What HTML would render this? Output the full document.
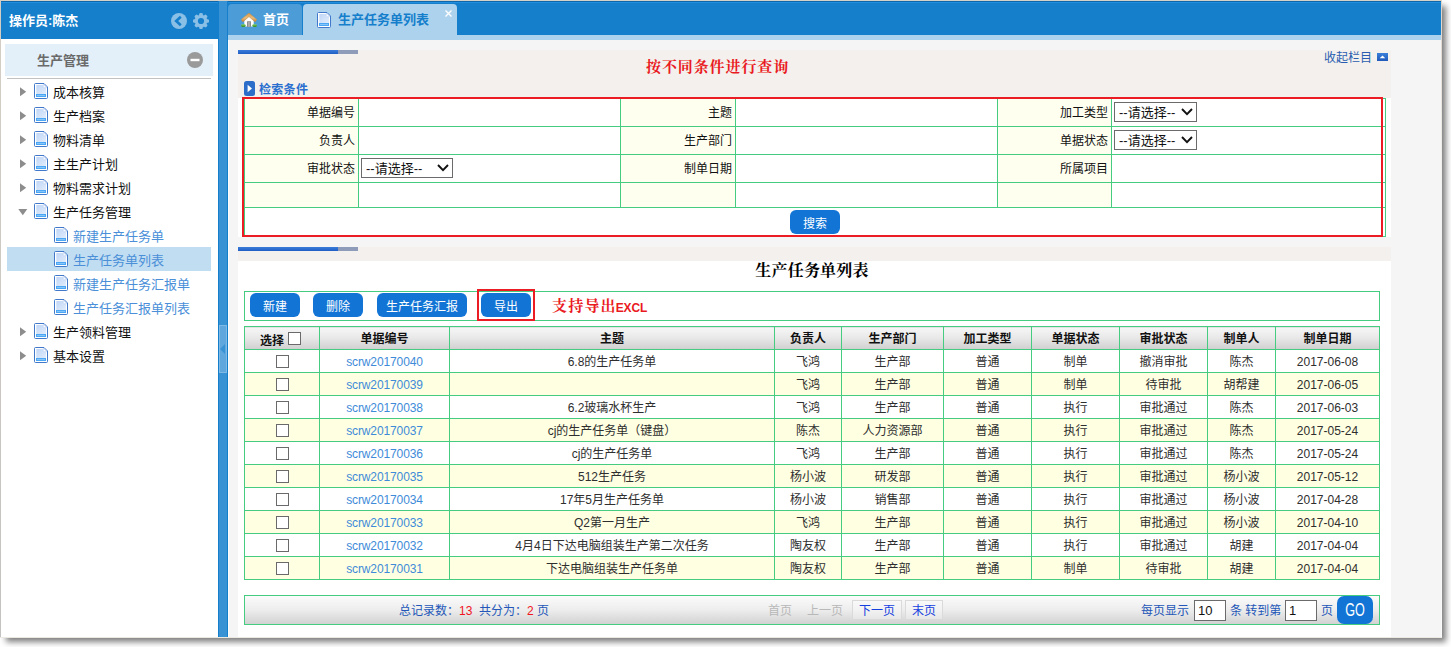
<!DOCTYPE html>
<html lang="zh-CN">
<head>
<meta charset="utf-8">
<title>生产任务单列表</title>
<style>
*{box-sizing:border-box;}
html,body{margin:0;padding:0;}
body{width:1451px;height:647px;overflow:hidden;background:#fff;position:relative;
 font-family:"Liberation Sans","Noto Sans CJK SC",sans-serif;font-size:12px;color:#222;}
#win{position:absolute;left:0;top:0;width:1442px;height:638px;background:#f5f5f5;overflow:hidden;}
#shadow{position:absolute;left:2px;top:2px;width:1440px;height:636px;box-shadow:4px 4px 6px 0 rgba(0,0,0,.5);}
#edgeT{position:absolute;left:0;top:0;width:1442px;height:1px;background:#d6d1c8;z-index:50;}
#edgeL{position:absolute;left:0;top:0;width:1px;height:638px;background:linear-gradient(#d4cec5,#c4c3c1);z-index:50;}
#edgeR{position:absolute;left:1441px;top:0;width:1px;height:638px;background:linear-gradient(#dcd4cb,#f4f2f0 30%,#fafafa);z-index:50;}
#edgeB{position:absolute;left:0;top:637px;width:1442px;height:1px;background:#ece8e2;z-index:50;}
.abs{position:absolute;}
/* sidebar */
#shead{position:absolute;left:1px;top:1px;width:217px;height:38px;background:#157fcc;border-top:1px solid #0f66a8;box-shadow:inset 0 1px 0 #228ee0;}
#shead .ttl{position:absolute;left:8px;top:10px;line-height:18px;font-size:13px;font-weight:bold;color:#fff;white-space:nowrap;}
#sbody{position:absolute;left:1px;top:39px;width:217px;height:598px;background:#fff;}
#acc{position:absolute;left:5px;top:44px;width:208px;height:32px;background:#e3f0fa;}
#acc .ttl{position:absolute;left:32px;top:8px;line-height:18px;font-size:13px;color:#6a6a6a;font-weight:bold;white-space:nowrap;}
#accline{position:absolute;left:7px;top:78px;width:204px;height:1px;background:#c2c2c2;}
.trow{position:absolute;left:7px;width:204px;height:24px;font-size:13px;color:#111;white-space:nowrap;}
.trow.sel{background:#c1ddf1;}
.trow .doc{position:absolute;left:27px;top:4px;}
.trow.leaf .doc{left:47px;}
.trow .tt{position:absolute;left:46px;top:4px;line-height:19px;}
.trow.leaf .tt{left:66px;color:#4a8fd8;}
.ar{position:absolute;left:13px;top:8px;}
.ad{position:absolute;left:10.5px;top:10px;}
/* splitter */
#split{position:absolute;left:218px;top:1px;width:10px;height:636px;background:#157fcc;}
#split i{position:absolute;left:1px;top:0;width:8px;height:636px;background:#3892d4;}
#split b{position:absolute;left:1px;top:324px;width:8px;height:48px;background:#5fa7dd;border:1px solid #7fb9e5;}
#split u{position:absolute;left:2px;top:343px;width:0;height:0;border-right:5px solid #3892d4;border-top:5px solid transparent;border-bottom:5px solid transparent;}
/* tabs */
#tabbar{position:absolute;left:228px;top:1px;width:1213px;height:34px;background:#157fcc;border-top:1px solid #0f66a8;box-shadow:inset 0 1px 0 #228ee0;}
#strip{position:absolute;left:228px;top:35px;width:1213px;height:5px;background:#add2ed;}
.tab{position:absolute;top:4px;height:31px;border-radius:4px 4px 0 0;font-size:13px;font-weight:bold;white-space:nowrap;}
#tab1{left:228px;width:74px;background:#4b9cd7;color:#fff;}
#tab2{left:303px;width:154px;background:#add2ed;color:#157fcc;}
.tab .tx{position:absolute;top:7px;line-height:18px;}
/* content panels */
.panel{position:absolute;left:238px;width:1153px;background:#fff;}
.phead{position:absolute;left:0;top:0;width:1153px;background:#f3f0ed;}
.bar{position:absolute;left:0;top:0;width:120px;height:4px;background:#8e9bb9;}
.bar i{position:absolute;left:0;top:0;width:100px;height:4px;background:linear-gradient(#3a7bd8,#1f5fc6);}
/* search table */
#st{position:absolute;left:244px;top:98px;width:1141px;border-collapse:collapse;table-layout:fixed;}
#st td{border:1px solid #45cc80;padding:0 3px 2px 3px;height:28px;font-size:12px;color:#111;vertical-align:middle;white-space:nowrap;}
#st td.l{background:#fffff0;text-align:right;}
#st td.v{background:#fff;text-align:left;padding-left:2px;}
.sel2{display:inline-block;position:relative;height:20px;border:1px solid #6b6b6b;background:#fff;font-size:13px;line-height:20px;padding-left:4px;vertical-align:middle;color:#111;}
.sel2 svg{position:absolute;right:3px;top:5px;}
.btn{position:absolute;height:24px;background:#1275d6;color:#fff;border-radius:6px;font-size:12px;text-align:center;line-height:28px;white-space:nowrap;}
/* list */
#tb{position:absolute;left:244px;top:291px;width:1136px;height:30px;border:1px solid #45cc80;background:#fff;}
#lt{position:absolute;left:244px;top:326px;width:1135px;border-collapse:collapse;table-layout:fixed;}
#lt td,#lt th{border:1px solid #45cc80;height:23px;padding:1px 0 0 0;text-align:center;font-size:12px;color:#2e2e2e;white-space:nowrap;overflow:hidden;line-height:20px;}
#lt th{font-weight:bold;color:#111;background:linear-gradient(#f6f6f6,#e9e9e9 45%,#cfcfcf);}
#lt tr.alt td{background:#ffffe1;}
#lt td{background:#fff;}
#lt a{color:#3e8bd9;letter-spacing:-.12px;}
.cb{display:inline-block;width:13px;height:13px;border:1px solid #6a6a6a;background:#fff;vertical-align:middle;position:relative;top:-1px;}
#pg{position:absolute;left:244px;top:595px;width:1136px;height:30px;border:1px solid #45cc80;background:linear-gradient(#fbfbfb,#ededed 50%,#d2d2d2);font-size:12px;color:#2457b8;}
#pg span,#pg input{position:absolute;white-space:nowrap;}
.pi{height:21px;border:1px solid #6b6b6b;background:#fff;font-size:13px;color:#111;line-height:19px;padding-left:3px;}
</style>
</head>
<body>
<div id="shadow"></div>
<div id="win">
<div id="shead"><span class="ttl">操作员:陈杰</span>
<svg class="abs" style="left:170px;top:11px" width="16" height="16" viewBox="0 0 16 16"><circle cx="8" cy="8" r="8" fill="#8abfe6"/><path d="M9.8 3.8 5.2 8l4.6 4.2" fill="none" stroke="#157fcc" stroke-width="2.6"/></svg>
<svg class="abs" style="left:192px;top:11px" width="16" height="16" viewBox="0 0 16 16"><g fill="#8abfe6"><circle cx="8" cy="8" r="6.3"/><rect x="6.2" y="0" width="3.6" height="16" rx="1.2"/><rect x="0" y="6.2" width="16" height="3.6" rx="1.2"/><rect x="6.2" y="0" width="3.6" height="16" rx="1.2" transform="rotate(45 8 8)"/><rect x="0" y="6.2" width="16" height="3.6" rx="1.2" transform="rotate(45 8 8)"/></g><circle cx="8" cy="8" r="3.1" fill="#157fcc"/></svg>
</div>
<div id="sbody"></div>
<div id="acc"><span class="ttl">生产管理</span>
<svg class="abs" style="left:182px;top:8px" width="16" height="16" viewBox="0 0 16 16"><circle cx="8" cy="8" r="8" fill="#9a9a9a"/><rect x="3.5" y="6.8" width="9" height="2.4" fill="#fff"/></svg>
</div>
<div id="accline"></div>
<div class="trow" style="top:79px"><svg class="ar" width="7" height="10" viewBox="0 0 7 10"><path d="M0 0.300 6.200 4.800 0 9.300z" fill="#8d8d8d"/></svg><svg class="doc" width="14" height="16" viewBox="0 0 14 16"><defs><linearGradient id="dg" x1="0" y1="0" x2="1" y2="1"><stop offset="0" stop-color="#bfd6f6"/><stop offset="1" stop-color="#e2ecfc"/></linearGradient></defs><path d="M1.500 .500h8.500l3.500 3.500v10.500a1 1 0 0 1-1 1h-11a1 1 0 0 1-1-1v-13a1 1 0 0 1 1-1z" fill="#fff" stroke="#4178c9"/><path d="M2.300 2h6.700v3h3v6h-9.700z" fill="url(#dg)"/><path d="M9.300 1.200v3.500h3.500z" fill="#f6f9fe" stroke="#a9c4ee" stroke-width=".5"/><rect x="2" y="11" width="10" height="3" fill="#4ba6f3"/><rect x="3" y="12" width="8" height="1" fill="#86c5f9"/></svg><span class="tt">成本核算</span></div>
<div class="trow" style="top:103px"><svg class="ar" width="7" height="10" viewBox="0 0 7 10"><path d="M0 0.300 6.200 4.800 0 9.300z" fill="#8d8d8d"/></svg><svg class="doc" width="14" height="16" viewBox="0 0 14 16"><defs><linearGradient id="dg" x1="0" y1="0" x2="1" y2="1"><stop offset="0" stop-color="#bfd6f6"/><stop offset="1" stop-color="#e2ecfc"/></linearGradient></defs><path d="M1.500 .500h8.500l3.500 3.500v10.500a1 1 0 0 1-1 1h-11a1 1 0 0 1-1-1v-13a1 1 0 0 1 1-1z" fill="#fff" stroke="#4178c9"/><path d="M2.300 2h6.700v3h3v6h-9.700z" fill="url(#dg)"/><path d="M9.300 1.200v3.500h3.500z" fill="#f6f9fe" stroke="#a9c4ee" stroke-width=".5"/><rect x="2" y="11" width="10" height="3" fill="#4ba6f3"/><rect x="3" y="12" width="8" height="1" fill="#86c5f9"/></svg><span class="tt">生产档案</span></div>
<div class="trow" style="top:127px"><svg class="ar" width="7" height="10" viewBox="0 0 7 10"><path d="M0 0.300 6.200 4.800 0 9.300z" fill="#8d8d8d"/></svg><svg class="doc" width="14" height="16" viewBox="0 0 14 16"><defs><linearGradient id="dg" x1="0" y1="0" x2="1" y2="1"><stop offset="0" stop-color="#bfd6f6"/><stop offset="1" stop-color="#e2ecfc"/></linearGradient></defs><path d="M1.500 .500h8.500l3.500 3.500v10.500a1 1 0 0 1-1 1h-11a1 1 0 0 1-1-1v-13a1 1 0 0 1 1-1z" fill="#fff" stroke="#4178c9"/><path d="M2.300 2h6.700v3h3v6h-9.700z" fill="url(#dg)"/><path d="M9.300 1.200v3.500h3.500z" fill="#f6f9fe" stroke="#a9c4ee" stroke-width=".5"/><rect x="2" y="11" width="10" height="3" fill="#4ba6f3"/><rect x="3" y="12" width="8" height="1" fill="#86c5f9"/></svg><span class="tt">物料清单</span></div>
<div class="trow" style="top:151px"><svg class="ar" width="7" height="10" viewBox="0 0 7 10"><path d="M0 0.300 6.200 4.800 0 9.300z" fill="#8d8d8d"/></svg><svg class="doc" width="14" height="16" viewBox="0 0 14 16"><defs><linearGradient id="dg" x1="0" y1="0" x2="1" y2="1"><stop offset="0" stop-color="#bfd6f6"/><stop offset="1" stop-color="#e2ecfc"/></linearGradient></defs><path d="M1.500 .500h8.500l3.500 3.500v10.500a1 1 0 0 1-1 1h-11a1 1 0 0 1-1-1v-13a1 1 0 0 1 1-1z" fill="#fff" stroke="#4178c9"/><path d="M2.300 2h6.700v3h3v6h-9.700z" fill="url(#dg)"/><path d="M9.300 1.200v3.500h3.500z" fill="#f6f9fe" stroke="#a9c4ee" stroke-width=".5"/><rect x="2" y="11" width="10" height="3" fill="#4ba6f3"/><rect x="3" y="12" width="8" height="1" fill="#86c5f9"/></svg><span class="tt">主生产计划</span></div>
<div class="trow" style="top:175px"><svg class="ar" width="7" height="10" viewBox="0 0 7 10"><path d="M0 0.300 6.200 4.800 0 9.300z" fill="#8d8d8d"/></svg><svg class="doc" width="14" height="16" viewBox="0 0 14 16"><defs><linearGradient id="dg" x1="0" y1="0" x2="1" y2="1"><stop offset="0" stop-color="#bfd6f6"/><stop offset="1" stop-color="#e2ecfc"/></linearGradient></defs><path d="M1.500 .500h8.500l3.500 3.500v10.500a1 1 0 0 1-1 1h-11a1 1 0 0 1-1-1v-13a1 1 0 0 1 1-1z" fill="#fff" stroke="#4178c9"/><path d="M2.300 2h6.700v3h3v6h-9.700z" fill="url(#dg)"/><path d="M9.300 1.200v3.500h3.500z" fill="#f6f9fe" stroke="#a9c4ee" stroke-width=".5"/><rect x="2" y="11" width="10" height="3" fill="#4ba6f3"/><rect x="3" y="12" width="8" height="1" fill="#86c5f9"/></svg><span class="tt">物料需求计划</span></div>
<div class="trow" style="top:199px"><svg class="ad" width="10" height="7" viewBox="0 0 10 7"><path d="M0.300 0 9.300 0 4.800 6.200z" fill="#8d8d8d"/></svg><svg class="doc" width="14" height="16" viewBox="0 0 14 16"><defs><linearGradient id="dg" x1="0" y1="0" x2="1" y2="1"><stop offset="0" stop-color="#bfd6f6"/><stop offset="1" stop-color="#e2ecfc"/></linearGradient></defs><path d="M1.500 .500h8.500l3.500 3.500v10.500a1 1 0 0 1-1 1h-11a1 1 0 0 1-1-1v-13a1 1 0 0 1 1-1z" fill="#fff" stroke="#4178c9"/><path d="M2.300 2h6.700v3h3v6h-9.700z" fill="url(#dg)"/><path d="M9.300 1.200v3.500h3.500z" fill="#f6f9fe" stroke="#a9c4ee" stroke-width=".5"/><rect x="2" y="11" width="10" height="3" fill="#4ba6f3"/><rect x="3" y="12" width="8" height="1" fill="#86c5f9"/></svg><span class="tt">生产任务管理</span></div>
<div class="trow leaf" style="top:223px"><svg class="doc" width="14" height="16" viewBox="0 0 14 16"><defs><linearGradient id="dg" x1="0" y1="0" x2="1" y2="1"><stop offset="0" stop-color="#bfd6f6"/><stop offset="1" stop-color="#e2ecfc"/></linearGradient></defs><path d="M1.500 .500h8.500l3.500 3.500v10.500a1 1 0 0 1-1 1h-11a1 1 0 0 1-1-1v-13a1 1 0 0 1 1-1z" fill="#fff" stroke="#4178c9"/><path d="M2.300 2h6.700v3h3v6h-9.700z" fill="url(#dg)"/><path d="M9.300 1.200v3.500h3.500z" fill="#f6f9fe" stroke="#a9c4ee" stroke-width=".5"/><rect x="2" y="11" width="10" height="3" fill="#4ba6f3"/><rect x="3" y="12" width="8" height="1" fill="#86c5f9"/></svg><span class="tt">新建生产任务单</span></div>
<div class="trow sel leaf" style="top:247px"><svg class="doc" width="14" height="16" viewBox="0 0 14 16"><defs><linearGradient id="dg" x1="0" y1="0" x2="1" y2="1"><stop offset="0" stop-color="#bfd6f6"/><stop offset="1" stop-color="#e2ecfc"/></linearGradient></defs><path d="M1.500 .500h8.500l3.500 3.500v10.500a1 1 0 0 1-1 1h-11a1 1 0 0 1-1-1v-13a1 1 0 0 1 1-1z" fill="#fff" stroke="#4178c9"/><path d="M2.300 2h6.700v3h3v6h-9.700z" fill="url(#dg)"/><path d="M9.300 1.200v3.500h3.500z" fill="#f6f9fe" stroke="#a9c4ee" stroke-width=".5"/><rect x="2" y="11" width="10" height="3" fill="#4ba6f3"/><rect x="3" y="12" width="8" height="1" fill="#86c5f9"/></svg><span class="tt">生产任务单列表</span></div>
<div class="trow leaf" style="top:271px"><svg class="doc" width="14" height="16" viewBox="0 0 14 16"><defs><linearGradient id="dg" x1="0" y1="0" x2="1" y2="1"><stop offset="0" stop-color="#bfd6f6"/><stop offset="1" stop-color="#e2ecfc"/></linearGradient></defs><path d="M1.500 .500h8.500l3.500 3.500v10.500a1 1 0 0 1-1 1h-11a1 1 0 0 1-1-1v-13a1 1 0 0 1 1-1z" fill="#fff" stroke="#4178c9"/><path d="M2.300 2h6.700v3h3v6h-9.700z" fill="url(#dg)"/><path d="M9.300 1.200v3.500h3.500z" fill="#f6f9fe" stroke="#a9c4ee" stroke-width=".5"/><rect x="2" y="11" width="10" height="3" fill="#4ba6f3"/><rect x="3" y="12" width="8" height="1" fill="#86c5f9"/></svg><span class="tt">新建生产任务汇报单</span></div>
<div class="trow leaf" style="top:295px"><svg class="doc" width="14" height="16" viewBox="0 0 14 16"><defs><linearGradient id="dg" x1="0" y1="0" x2="1" y2="1"><stop offset="0" stop-color="#bfd6f6"/><stop offset="1" stop-color="#e2ecfc"/></linearGradient></defs><path d="M1.500 .500h8.500l3.500 3.500v10.500a1 1 0 0 1-1 1h-11a1 1 0 0 1-1-1v-13a1 1 0 0 1 1-1z" fill="#fff" stroke="#4178c9"/><path d="M2.300 2h6.700v3h3v6h-9.700z" fill="url(#dg)"/><path d="M9.300 1.200v3.500h3.500z" fill="#f6f9fe" stroke="#a9c4ee" stroke-width=".5"/><rect x="2" y="11" width="10" height="3" fill="#4ba6f3"/><rect x="3" y="12" width="8" height="1" fill="#86c5f9"/></svg><span class="tt">生产任务汇报单列表</span></div>
<div class="trow" style="top:319px"><svg class="ar" width="7" height="10" viewBox="0 0 7 10"><path d="M0 0.300 6.200 4.800 0 9.300z" fill="#8d8d8d"/></svg><svg class="doc" width="14" height="16" viewBox="0 0 14 16"><defs><linearGradient id="dg" x1="0" y1="0" x2="1" y2="1"><stop offset="0" stop-color="#bfd6f6"/><stop offset="1" stop-color="#e2ecfc"/></linearGradient></defs><path d="M1.500 .500h8.500l3.500 3.500v10.500a1 1 0 0 1-1 1h-11a1 1 0 0 1-1-1v-13a1 1 0 0 1 1-1z" fill="#fff" stroke="#4178c9"/><path d="M2.300 2h6.700v3h3v6h-9.700z" fill="url(#dg)"/><path d="M9.300 1.200v3.500h3.500z" fill="#f6f9fe" stroke="#a9c4ee" stroke-width=".5"/><rect x="2" y="11" width="10" height="3" fill="#4ba6f3"/><rect x="3" y="12" width="8" height="1" fill="#86c5f9"/></svg><span class="tt">生产领料管理</span></div>
<div class="trow" style="top:343px"><svg class="ar" width="7" height="10" viewBox="0 0 7 10"><path d="M0 0.300 6.200 4.800 0 9.300z" fill="#8d8d8d"/></svg><svg class="doc" width="14" height="16" viewBox="0 0 14 16"><defs><linearGradient id="dg" x1="0" y1="0" x2="1" y2="1"><stop offset="0" stop-color="#bfd6f6"/><stop offset="1" stop-color="#e2ecfc"/></linearGradient></defs><path d="M1.500 .500h8.500l3.500 3.500v10.500a1 1 0 0 1-1 1h-11a1 1 0 0 1-1-1v-13a1 1 0 0 1 1-1z" fill="#fff" stroke="#4178c9"/><path d="M2.300 2h6.700v3h3v6h-9.700z" fill="url(#dg)"/><path d="M9.300 1.200v3.500h3.500z" fill="#f6f9fe" stroke="#a9c4ee" stroke-width=".5"/><rect x="2" y="11" width="10" height="3" fill="#4ba6f3"/><rect x="3" y="12" width="8" height="1" fill="#86c5f9"/></svg><span class="tt">基本设置</span></div>
<div id="split"><i></i><b></b><u></u></div>
<div id="tabbar"></div>
<div id="strip"></div>
<div class="abs" style="left:228px;top:40px;width:1px;height:597px;background:#fdfdfd"></div>
<div class="tab" id="tab1">
<svg class="abs" style="left:13px;top:9px" width="16" height="14" viewBox="0 0 16 14"><defs><linearGradient id="hr" x1="0" y1="0" x2="0" y2="1"><stop offset="0" stop-color="#d9953f"/><stop offset=".55" stop-color="#e9bd7f"/><stop offset="1" stop-color="#c07d2e"/></linearGradient><linearGradient id="hg" x1="0" y1="0" x2="0" y2="1"><stop offset="0" stop-color="#86cf62"/><stop offset="1" stop-color="#2f8a22"/></linearGradient></defs><path d="M3.3 7.2 8 3.4l4.700 3.800V13.600H3.300z" fill="#fdfdfd"/><rect x="6.100" y="8.300" width="3.800" height="5.600" fill="#7d7d7d"/><rect x="6.900" y="9" width="2.200" height="4.900" fill="#a9a9a9"/><path d="M8 0 15.900 6.600 14.200 8.900 8 3.700 1.800 8.900 .1 6.600z" fill="url(#hr)" stroke="#c98a3c" stroke-width=".4" stroke-linejoin="round"/><rect x="0" y="11.200" width="4.700" height="2.800" rx="1.400" fill="url(#hg)"/><rect x="11.300" y="11.200" width="4.700" height="2.800" rx="1.400" fill="url(#hg)"/></svg>
<span class="tx" style="left:35px">首页</span></div>
<div class="tab" id="tab2">
<span class="abs" style="left:14px;top:8px;width:14px;height:16px"><svg class="doc" width="14" height="16" viewBox="0 0 14 16"><defs><linearGradient id="dg" x1="0" y1="0" x2="1" y2="1"><stop offset="0" stop-color="#bfd6f6"/><stop offset="1" stop-color="#e2ecfc"/></linearGradient></defs><path d="M1.500 .500h8.500l3.500 3.500v10.500a1 1 0 0 1-1 1h-11a1 1 0 0 1-1-1v-13a1 1 0 0 1 1-1z" fill="#fff" stroke="#4178c9"/><path d="M2.300 2h6.700v3h3v6h-9.700z" fill="url(#dg)"/><path d="M9.300 1.200v3.500h3.500z" fill="#f6f9fe" stroke="#a9c4ee" stroke-width=".5"/><rect x="2" y="11" width="10" height="3" fill="#4ba6f3"/><rect x="3" y="12" width="8" height="1" fill="#86c5f9"/></svg></span>
<span class="tx" style="left:35px">生产任务单列表</span>
<svg class="abs" style="left:142px;top:6px" width="7" height="7" viewBox="0 0 7 7"><path d="M.5 .5l6 6M6.5 .5l-6 6" stroke="#fff" stroke-width="1.3" fill="none"/></svg>
</div>

<!-- panel 1 -->
<div class="panel" style="top:50px;height:187px"><div class="phead" style="height:48px"><div class="bar"><i></i></div></div></div>
<div class="abs" style="left:646px;top:56px;font:bold 15px/22px 'Liberation Serif','Noto Serif CJK SC',serif;color:#ea1a22;white-space:nowrap;letter-spacing:.9px">按不同条件进行查询</div>
<div class="abs" style="left:1324px;top:49px;font-size:12px;line-height:18px;color:#2a5db0;white-space:nowrap">收起栏目</div>
<svg class="abs" style="left:1377px;top:53px" width="11" height="8" viewBox="0 0 11 8"><defs><linearGradient id="cg" x1="0" y1="0" x2="0" y2="1"><stop offset="0" stop-color="#3b7fd9"/><stop offset="1" stop-color="#2059bb"/></linearGradient></defs><rect width="11" height="8" fill="url(#cg)"/><path d="M2.700 5.200 5.500 2.400l2.800 2.800z" fill="#fff"/></svg>
<svg class="abs" style="left:244px;top:81px" width="11" height="15" viewBox="0 0 11 15"><rect width="11" height="15" rx="2.5" fill="#2b6dc9"/><path d="M3.6 3.8 8 7.5l-4.400 3.7z" fill="#fff"/></svg>
<div class="abs" style="left:259px;top:81px;font-size:12px;line-height:18px;font-weight:bold;color:#2a6fcf;white-space:nowrap;letter-spacing:.3px">检索条件</div>
<table id="st">
<colgroup><col style="width:114px"><col style="width:262px"><col style="width:115px"><col style="width:262px"><col style="width:114px"><col style="width:274px"></colgroup>
<tr><td class="l">单据编号</td><td class="v"></td><td class="l">主题</td><td class="v"></td><td class="l">加工类型</td><td class="v"><span class="sel2" style="width:83px">--请选择--<svg width="12" height="8" viewBox="0 0 12 8"><path d="M1 1l5 5.2L11 1" fill="none" stroke="#111" stroke-width="1.9"/></svg></span></td></tr>
<tr><td class="l">负责人</td><td class="v"></td><td class="l">生产部门</td><td class="v"></td><td class="l">单据状态</td><td class="v"><span class="sel2" style="width:83px">--请选择--<svg width="12" height="8" viewBox="0 0 12 8"><path d="M1 1l5 5.2L11 1" fill="none" stroke="#111" stroke-width="1.9"/></svg></span></td></tr>
<tr><td class="l">审批状态</td><td class="v"><span class="sel2" style="width:92px">--请选择--<svg width="12" height="8" viewBox="0 0 12 8"><path d="M1 1l5 5.2L11 1" fill="none" stroke="#111" stroke-width="1.9"/></svg></span></td><td class="l">制单日期</td><td class="v"></td><td class="l">所属项目</td><td class="v"></td></tr>
<tr><td class="l" style="height:25px"></td><td class="v" style="height:25px"></td><td class="l" style="height:25px"></td><td class="v" style="height:25px"></td><td class="l" style="height:25px"></td><td class="v" style="height:25px"></td></tr>
<tr><td colspan="6" class="v" style="height:29px"></td></tr>
</table>
<div class="btn" style="left:790px;top:210px;width:50px">搜索</div>
<div class="abs" style="left:242px;top:97px;width:1141px;height:140px;border:2px solid #ec1c24;"></div>

<!-- panel 2 -->
<div class="panel" style="top:247px;height:390px"><div class="phead" style="height:14px"><div class="bar"><i></i></div></div></div>
<div class="abs" style="left:238px;top:259px;width:1148px;text-align:center;font:bold 16px/24px 'Liberation Serif','Noto Serif CJK SC',serif;color:#000;white-space:nowrap;letter-spacing:.2px">生产任务单列表</div>
<div id="tb"></div>
<div class="btn" style="left:250px;top:293px;width:50px">新建</div>
<div class="btn" style="left:313px;top:293px;width:50px">删除</div>
<div class="btn" style="left:377px;top:293px;width:90px">生产任务汇报</div>
<div class="btn" style="left:481px;top:293px;width:50px">导出</div>
<div class="abs" style="left:477px;top:289px;width:58px;height:32px;border:2px solid #ec1c24;"></div>
<div class="abs" style="left:552px;top:295px;font:bold 15px/22px 'Liberation Serif','Noto Serif CJK SC',serif;color:#ea1a22;white-space:nowrap;letter-spacing:1.2px">支持导出<span style="font:bold 12px/22px 'Liberation Sans',sans-serif;letter-spacing:-.2px;position:relative;top:1px;left:-1px">EXCL</span></div>
<table id="lt">
<colgroup><col style="width:75px"><col style="width:130px"><col style="width:325px"><col style="width:67px"><col style="width:102px"><col style="width:88px"><col style="width:88px"><col style="width:88px"><col style="width:68px"><col style="width:104px"></colgroup>
<tr><th><span style="position:relative;top:2px;left:-2px">选择</span><span class="cb" style="margin-left:3px;top:-1px;left:-1px"></span></th><th>单据编号</th><th>主题</th><th>负责人</th><th>生产部门</th><th>加工类型</th><th>单据状态</th><th>审批状态</th><th>制单人</th><th>制单日期</th></tr>
<tr><td><span class="cb"></span></td><td><a>scrw20170040</a></td><td>6.8的生产任务单</td><td>飞鸿</td><td>生产部</td><td>普通</td><td>制单</td><td>撤消审批</td><td>陈杰</td><td>2017-06-08</td></tr>
<tr class="alt"><td><span class="cb"></span></td><td><a>scrw20170039</a></td><td>&nbsp;</td><td>飞鸿</td><td>生产部</td><td>普通</td><td>制单</td><td>待审批</td><td>胡帮建</td><td>2017-06-05</td></tr>
<tr><td><span class="cb"></span></td><td><a>scrw20170038</a></td><td>6.2玻璃水杯生产</td><td>飞鸿</td><td>生产部</td><td>普通</td><td>执行</td><td>审批通过</td><td>陈杰</td><td>2017-06-03</td></tr>
<tr class="alt"><td><span class="cb"></span></td><td><a>scrw20170037</a></td><td>cj的生产任务单（键盘）</td><td>陈杰</td><td>人力资源部</td><td>普通</td><td>执行</td><td>审批通过</td><td>陈杰</td><td>2017-05-24</td></tr>
<tr><td><span class="cb"></span></td><td><a>scrw20170036</a></td><td>cj的生产任务单</td><td>飞鸿</td><td>生产部</td><td>普通</td><td>执行</td><td>审批通过</td><td>陈杰</td><td>2017-05-24</td></tr>
<tr class="alt"><td><span class="cb"></span></td><td><a>scrw20170035</a></td><td>512生产任务</td><td>杨小波</td><td>研发部</td><td>普通</td><td>执行</td><td>审批通过</td><td>杨小波</td><td>2017-05-12</td></tr>
<tr><td><span class="cb"></span></td><td><a>scrw20170034</a></td><td>17年5月生产任务单</td><td>杨小波</td><td>销售部</td><td>普通</td><td>执行</td><td>审批通过</td><td>杨小波</td><td>2017-04-28</td></tr>
<tr class="alt"><td><span class="cb"></span></td><td><a>scrw20170033</a></td><td>Q2第一月生产</td><td>飞鸿</td><td>生产部</td><td>普通</td><td>执行</td><td>审批通过</td><td>杨小波</td><td>2017-04-10</td></tr>
<tr><td><span class="cb"></span></td><td><a>scrw20170032</a></td><td>4月4日下达电脑组装生产第二次任务</td><td>陶友权</td><td>生产部</td><td>普通</td><td>执行</td><td>审批通过</td><td>胡建</td><td>2017-04-04</td></tr>
<tr class="alt"><td><span class="cb"></span></td><td><a>scrw20170031</a></td><td>下达电脑组装生产任务单</td><td>陶友权</td><td>生产部</td><td>普通</td><td>制单</td><td>待审批</td><td>胡建</td><td>2017-04-04</td></tr>
</table>
<div id="pg">
<span style="left:154px;top:6px;line-height:18px">总记录数：<b style="color:#f0141e;font-weight:normal">13</b>&nbsp; 共分为：<b style="color:#f0141e;font-weight:normal">2</b> 页</span>
<span style="left:523px;top:6px;line-height:18px;color:#b8b8b8">首页</span>
<span style="left:562px;top:6px;line-height:18px;color:#b8b8b8">上一页</span>
<span style="left:607px;top:4px;line-height:20px;width:50px;height:20px;text-align:center;border:1px solid #dadada;background:rgba(255,255,255,.3);color:#1540e0">下一页</span>
<span style="left:660px;top:4px;line-height:20px;width:38px;height:20px;text-align:center;border:1px solid #dadada;background:rgba(255,255,255,.3);color:#1540e0">末页</span>
<span style="left:896px;top:6px;line-height:18px">每页显示</span>
<span class="pi" style="left:949px;top:4px;width:32px">10</span>
<span style="left:985px;top:6px;line-height:18px">条 转到第</span>
<span class="pi" style="left:1040px;top:4px;width:32px">1</span>
<span style="left:1076px;top:6px;line-height:18px">页</span>
<span style="left:1092px;top:0;width:36px;height:28px;background:#1275d6;border-radius:7px;color:#fff;font-size:18px;line-height:29px;text-align:center;"><i style="display:inline-block;font-style:normal;transform:scaleX(.7);transform-origin:50% 50%">GO</i></span>
</div>
</div>
<div id="edgeT"></div><div id="edgeL"></div><div id="edgeR"></div><div id="edgeB"></div>
</body>
</html>
